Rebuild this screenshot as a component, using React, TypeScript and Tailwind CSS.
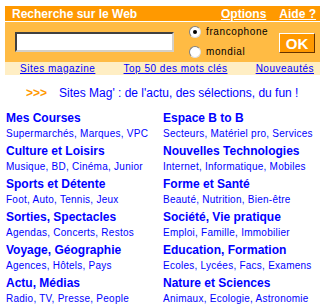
import React from 'react';

const categories = [
    { title: 'Mes Courses', sub: 'Supermarchés, Marques, VPC' },
    { title: 'Espace B to B', sub: 'Secteurs, Matériel pro, Services' },
    { title: 'Culture et Loisirs', sub: 'Musique, BD, Cinéma, Junior' },
    { title: 'Nouvelles Technologies', sub: 'Internet, Informatique, Mobiles' },
    { title: 'Sports et Détente', sub: 'Foot, Auto, Tennis, Jeux' },
    { title: 'Forme et Santé', sub: 'Beauté, Nutrition, Bien-être' },
    { title: 'Sorties, Spectacles', sub: 'Agendas, Concerts, Restos' },
    { title: 'Société, Vie pratique', sub: 'Emploi, Famille, Immobilier' },
    { title: 'Voyage, Géographie', sub: 'Agences, Hôtels, Pays' },
    { title: 'Education, Formation', sub: 'Ecoles, Lycées, Facs, Examens' },
    { title: 'Actu, Médias', sub: 'Radio, TV, Presse, People' },
    { title: 'Nature et Sciences', sub: 'Animaux, Ecologie, Astronomie' },
];

const Radio: React.FC<{ checked?: boolean; label: string }> = ({ checked = false, label }) => (
    <div className="flex items-center gap-[5px] h-[12px]">
        <div className="w-[12px] h-[12px] rounded-full bg-white border border-t-[#808080] border-l-[#808080] border-b-[#e0e0e0] border-r-[#e0e0e0] flex items-center justify-center">
            {checked && <div className="w-[4px] h-[4px] rounded-full bg-black" />}
        </div>
        <span className="text-[10px] leading-none text-black tracking-[0.6px]">{label}</span>
    </div>
);

export default function App() {
    return (
        <div className="w-[328px] h-[308px] bg-white pt-[6px] pl-[5px] font-['Liberation_Sans',Arial,sans-serif]">
            <div className="w-[315px]">
                {/* header */}
                <div className="h-[15px] bg-[#ff9900] flex items-center justify-between pl-[7px] pr-[4px] border-b border-white box-content">
                    <span className="text-white font-bold text-[12px] leading-none">Recherche sur le Web</span>
                    <div className="flex gap-[13px] text-white font-bold text-[12px] leading-none">
                        <span className="underline">Options</span>
                        <span className="underline">Aide ?</span>
                    </div>
                </div>

                {/* search */}
                <div className="h-[40px] bg-[#ffbb44] flex items-center pl-[10px] pr-[5px]">
                    <div className="w-[159px] h-[20px] bg-white border-2 border-t-[#404040] border-l-[#404040] border-b-[#d4d0c8] border-r-[#d4d0c8]" />
                    <div className="ml-[15px] flex flex-col gap-[8px]">
                        <Radio checked label="francophone" />
                        <Radio label="mondial" />
                    </div>
                    <div className="ml-auto mt-[2px] w-[36px] h-[20px] bg-[#ff9900] border border-t-white border-l-white border-b-[#663300] border-r-[#663300] flex items-center justify-center text-white font-bold text-[15px] leading-none">
                        OK
                    </div>
                </div>

                {/* links band */}
                <div className="h-[13px] bg-[#ffeec4] flex items-center justify-between pl-[15px] pr-[6px] text-[10px] leading-none text-[#0000ff] tracking-[0.5px] whitespace-nowrap">
                    <span className="underline">Sites magazine</span>
                    <span className="underline">Top 50 des mots clés</span>
                    <span className="underline">Nouveautés</span>
                </div>
            </div>

            {/* mag line */}
            <div className="mt-[12px] pl-[21px] flex items-center text-[12px] leading-none whitespace-nowrap">
                <span className="text-[#ff9900] font-bold">&gt;&gt;&gt;</span>
                <span className="ml-[12px] text-[#0000ff]">Sites Mag' : de l'actu, des sélections, du fun !</span>
            </div>

            {/* categories */}
            <div className="mt-[13px] pl-[1px] grid grid-cols-[157px_1fr] gap-y-[6px]">
                {categories.map((c) => (
                    <div key={c.title} className="flex flex-col whitespace-nowrap">
                        <span className="text-[12px] font-bold text-[#0000ff] leading-[13px]">{c.title}</span>
                        <span className="mt-[3px] text-[10px] text-[#0000ff] leading-[11px] tracking-[0.25px]">{c.sub}</span>
                    </div>
                ))}
            </div>
        </div>
    );
}
